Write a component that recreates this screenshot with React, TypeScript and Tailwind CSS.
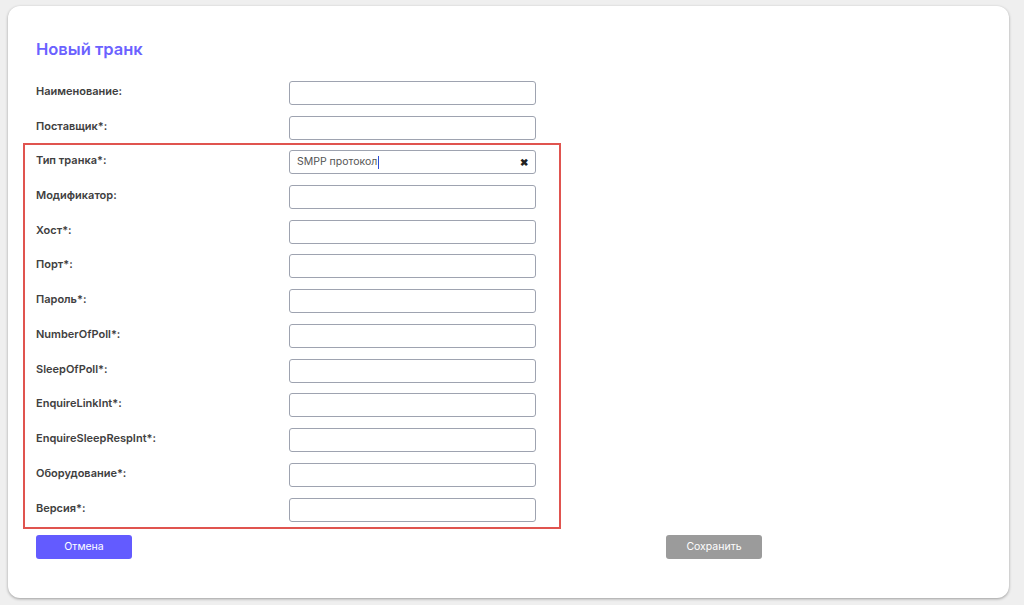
const topFields = ['Наименование:', 'Поставщик*:'];

const boxedFields = [
  'Тип транка*:',
  'Модификатор:',
  'Хост*:',
  'Порт*:',
  'Пароль*:',
  'NumberOfPoll*:',
  'SleepOfPoll*:',
  'EnquireLinkInt*:',
  'EnquireSleepRespInt*:',
  'Оборудование*:',
  'Версия*:',
];

function Field({ label, value }: { label: string; value?: string }) {
  return (
    <div className="flex items-center h-6">
      <div className="w-[253px] text-[11px] font-semibold text-[#404040] leading-none -mt-[3px]">{label}</div>
      <div className="w-[247px] h-6 border border-[#9ea3b0] rounded-[3px] bg-white flex items-center px-[7px]">
        {value && (
          <>
            <span className="text-[10.5px] text-[#555]">{value}</span>
            <span className="w-px h-[13px] bg-[#2b4bd8] ml-px" />
            <span className="ml-auto text-[10px] font-bold text-[#222] leading-none">✖</span>
          </>
        )}
      </div>
    </div>
  );
}

export default function App() {
  return (
    <div
      className="min-h-[605px] bg-[#efefef] pt-[6px] pl-[8px] pr-[15px] pb-[7px]"
      style={{ fontFamily: 'Inter, "Noto Sans", sans-serif' }}
    >
      <div className="bg-white rounded-[12px] shadow-[0_1px_3px_rgba(0,0,0,0.35)] h-[592px] pl-[28px] pt-[33px]">
        <h1 className="text-[16.5px] font-semibold text-[#6b62ff] leading-[20px]">Новый транк</h1>
        <div className="flex flex-col gap-[11px] mt-[22px]">
          {topFields.map((f) => (
            <Field key={f} label={f} />
          ))}
        </div>
        <div className="-ml-[13px] w-[538px] mt-[3px] border-2 border-[#e0544f] pl-[11px] pt-[5px] pb-[5px] flex flex-col gap-[10.75px]">
          {boxedFields.map((f, i) => (
            <Field key={f} label={f} value={i === 0 ? 'SMPP протокол' : undefined} />
          ))}
        </div>
        <div className="flex mt-[6px]">
          <button className="w-[96px] h-6 rounded-[3px] bg-[#635bff] text-white text-[10.5px]">Отмена</button>
          <button className="w-[96px] h-6 rounded-[3px] bg-[#9b9b9b] text-white text-[10.5px] ml-[534px]">Сохранить</button>
        </div>
      </div>
    </div>
  );
}
